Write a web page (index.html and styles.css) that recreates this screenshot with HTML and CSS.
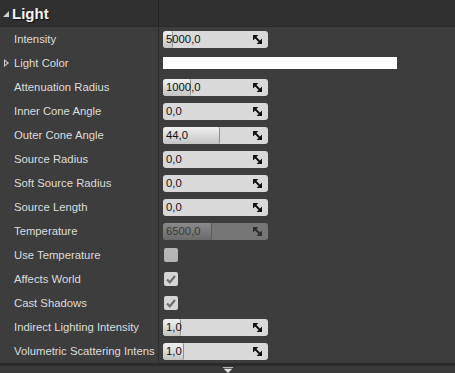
FILE: index.html
```html
<!DOCTYPE html>
<html lang="en">
<head>
    <meta charset="UTF-8">
    <title>Light Details</title>
    <link rel="stylesheet" href="styles.css">
</head>
<body>
    <div class="panel">
        <div class="category">
            <div class="cat-name"><span class="arrow-down"></span>Light</div>
            <div class="cat-value"></div>
        </div>

        <div class="rows">
            <div class="row">
                <div class="label">Intensity</div>
                <div class="value"><div class="spin"><div class="fill" style="width: 9px"></div><span class="num">5000,0</span><svg class="grip" viewBox="0 0 10 10"><path d="M0 0H6L0 6Z M10 10H4L10 4Z M1.5 3L3 1.5L8.5 7L7 8.5Z"/></svg></div></div>
            </div>
            <div class="row">
                <div class="label"><span class="expander"></span>Light Color</div>
                <div class="value"><div class="color-swatch"></div></div>
            </div>
            <div class="row">
                <div class="label">Attenuation Radius</div>
                <div class="value"><div class="spin"><div class="fill" style="width: 27px"></div><span class="num">1000,0</span><svg class="grip" viewBox="0 0 10 10"><path d="M0 0H6L0 6Z M10 10H4L10 4Z M1.5 3L3 1.5L8.5 7L7 8.5Z"/></svg></div></div>
            </div>
            <div class="row">
                <div class="label">Inner Cone Angle</div>
                <div class="value"><div class="spin"><span class="num">0,0</span><svg class="grip" viewBox="0 0 10 10"><path d="M0 0H6L0 6Z M10 10H4L10 4Z M1.5 3L3 1.5L8.5 7L7 8.5Z"/></svg></div></div>
            </div>
            <div class="row">
                <div class="label">Outer Cone Angle</div>
                <div class="value"><div class="spin"><div class="fill" style="width: 56px"></div><span class="num">44,0</span><svg class="grip" viewBox="0 0 10 10"><path d="M0 0H6L0 6Z M10 10H4L10 4Z M1.5 3L3 1.5L8.5 7L7 8.5Z"/></svg></div></div>
            </div>
            <div class="row">
                <div class="label">Source Radius</div>
                <div class="value"><div class="spin"><span class="num">0,0</span><svg class="grip" viewBox="0 0 10 10"><path d="M0 0H6L0 6Z M10 10H4L10 4Z M1.5 3L3 1.5L8.5 7L7 8.5Z"/></svg></div></div>
            </div>
            <div class="row">
                <div class="label">Soft Source Radius</div>
                <div class="value"><div class="spin"><span class="num">0,0</span><svg class="grip" viewBox="0 0 10 10"><path d="M0 0H6L0 6Z M10 10H4L10 4Z M1.5 3L3 1.5L8.5 7L7 8.5Z"/></svg></div></div>
            </div>
            <div class="row">
                <div class="label">Source Length</div>
                <div class="value"><div class="spin"><span class="num">0,0</span><svg class="grip" viewBox="0 0 10 10"><path d="M0 0H6L0 6Z M10 10H4L10 4Z M1.5 3L3 1.5L8.5 7L7 8.5Z"/></svg></div></div>
            </div>
            <div class="row">
                <div class="label">Temperature</div>
                <div class="value"><div class="spin disabled"><div class="fill" style="width: 48px"></div><span class="num">6500,0</span><svg class="grip" viewBox="0 0 10 10"><path d="M0 0H6L0 6Z M10 10H4L10 4Z M1.5 3L3 1.5L8.5 7L7 8.5Z"/></svg></div></div>
            </div>
            <div class="row">
                <div class="label">Use Temperature</div>
                <div class="value"><div class="check"></div></div>
            </div>
            <div class="row">
                <div class="label">Affects World</div>
                <div class="value"><div class="check on"><svg class="tick" viewBox="0 0 14 14"><path d="M3 7.5L5.8 10.3L11 4"/></svg></div></div>
            </div>
            <div class="row">
                <div class="label">Cast Shadows</div>
                <div class="value"><div class="check on"><svg class="tick" viewBox="0 0 14 14"><path d="M3 7.5L5.8 10.3L11 4"/></svg></div></div>
            </div>
            <div class="row">
                <div class="label">Indirect Lighting Intensity</div>
                <div class="value"><div class="spin"><div class="fill" style="width: 17px"></div><span class="num">1,0</span><svg class="grip" viewBox="0 0 10 10"><path d="M0 0H6L0 6Z M10 10H4L10 4Z M1.5 3L3 1.5L8.5 7L7 8.5Z"/></svg></div></div>
            </div>
            <div class="row">
                <div class="label"><span class="clip">Volumetric Scattering Intens</span></div>
                <div class="value"><div class="spin"><div class="fill" style="width: 20px"></div><span class="num">1,0</span><svg class="grip" viewBox="0 0 10 10"><path d="M0 0H6L0 6Z M10 10H4L10 4Z M1.5 3L3 1.5L8.5 7L7 8.5Z"/></svg></div></div>
            </div>
        </div>

        <div class="footer">
            <svg class="more" viewBox="0 0 12 7"><path d="M0 0H12V1H0Z M1 2H11L6 7Z"/></svg>
        </div>
    </div>
</body>
</html>
```

FILE: styles.css
```css
body {
    margin: 0;
    background: #3d3d3d;
    font-family: "Liberation Sans", Arial, sans-serif;
    font-size: 11px;
    overflow: hidden;
}

.panel {
    width: 455px;
    height: 373px;
    display: flex;
    flex-direction: column;
}

.category {
    height: 27px;
    display: flex;
    background: #303030;
    border-bottom: 1px solid #2a2a2a;
    box-sizing: border-box;
}

.cat-name {
    width: 158px;
    display: flex;
    align-items: center;
    color: #f2f2f2;
    font-size: 15px;
    font-weight: bold;
    padding-left: 3px;
    box-sizing: border-box;
    text-shadow: 1px 1px 1px #111;
}

.cat-value {
    flex: 1;
    border-left: 1px solid #232323;
}

.arrow-down {
    width: 0;
    height: 0;
    border-left: 6px solid transparent;
    border-bottom: 6px solid #cfcfcf;
    margin-right: 3px;
    margin-top: 2px;
}

.rows {
    display: flex;
    flex-direction: column;
}

.row {
    height: 24px;
    display: flex;
}

.label {
    width: 158px;
    display: flex;
    align-items: center;
    padding-left: 14px;
    box-sizing: border-box;
    color: #dcdcdc;
    font-size: 11.3px;
    white-space: nowrap;
    overflow: hidden;
    position: relative;
}

.expander {
    position: absolute;
    left: 4px;
    top: 8px;
    width: 0;
    height: 0;
    border-top: 4px solid transparent;
    border-bottom: 4px solid transparent;
    border-left: 5px solid #cfcfcf;
}

.expander::after {
    content: "";
    position: absolute;
    left: -4px;
    top: -2px;
    border-top: 2px solid transparent;
    border-bottom: 2px solid transparent;
    border-left: 2px solid #3d3d3d;
}

.value {
    flex: 1;
    display: flex;
    align-items: center;
    padding-left: 4px;
    border-left: 1px solid #2c2c2c;
}

.spin {
    width: 105px;
    height: 17px;
    border-radius: 3px;
    background: #d9d9d9;
    position: relative;
    display: flex;
    align-items: center;
    overflow: hidden;
}

.fill {
    position: absolute;
    left: 0;
    top: 0;
    bottom: 0;
    background: linear-gradient(#f0f0f0, #c4c4c4);
    border-right: 1px solid #8e8e8e;
    border-radius: 3px 2px 2px 3px;
}

.num {
    position: relative;
    padding-left: 3px;
    color: #111;
    font-size: 11.3px;
    flex: 1;
}

.grip {
    position: relative;
    width: 9px;
    height: 9px;
    margin-right: 6px;
    fill: #111;
}

.spin.disabled {
    background: #767676;
}

.spin.disabled .fill {
    background: linear-gradient(#8a8a8a, #6a6a6a);
    border-right-color: #5a5a5a;
}

.spin.disabled .num {
    color: #3a3a3a;
}

.spin.disabled .grip {
    fill: #2e2e2e;
}

.color-swatch {
    width: 234px;
    height: 12px;
    background: #ffffff;
}

.check {
    width: 14px;
    height: 14px;
    margin-left: 1px;
    border-radius: 2px;
    background: #b4b4b4;
    display: flex;
    align-items: center;
    justify-content: center;
}

.check.on {
    background: #d6d6d6;
}

.tick {
    width: 14px;
    height: 14px;
    fill: none;
    stroke: #6e6e6e;
    stroke-width: 2.2;
}

.footer {
    flex: 1;
    border-top: 3px solid #2b2b2b;
    background: #3a3a3a;
    display: flex;
    justify-content: center;
    padding-top: 1px;
}

.more {
    width: 12px;
    height: 6px;
    fill: #e0e0e0;
}
```
